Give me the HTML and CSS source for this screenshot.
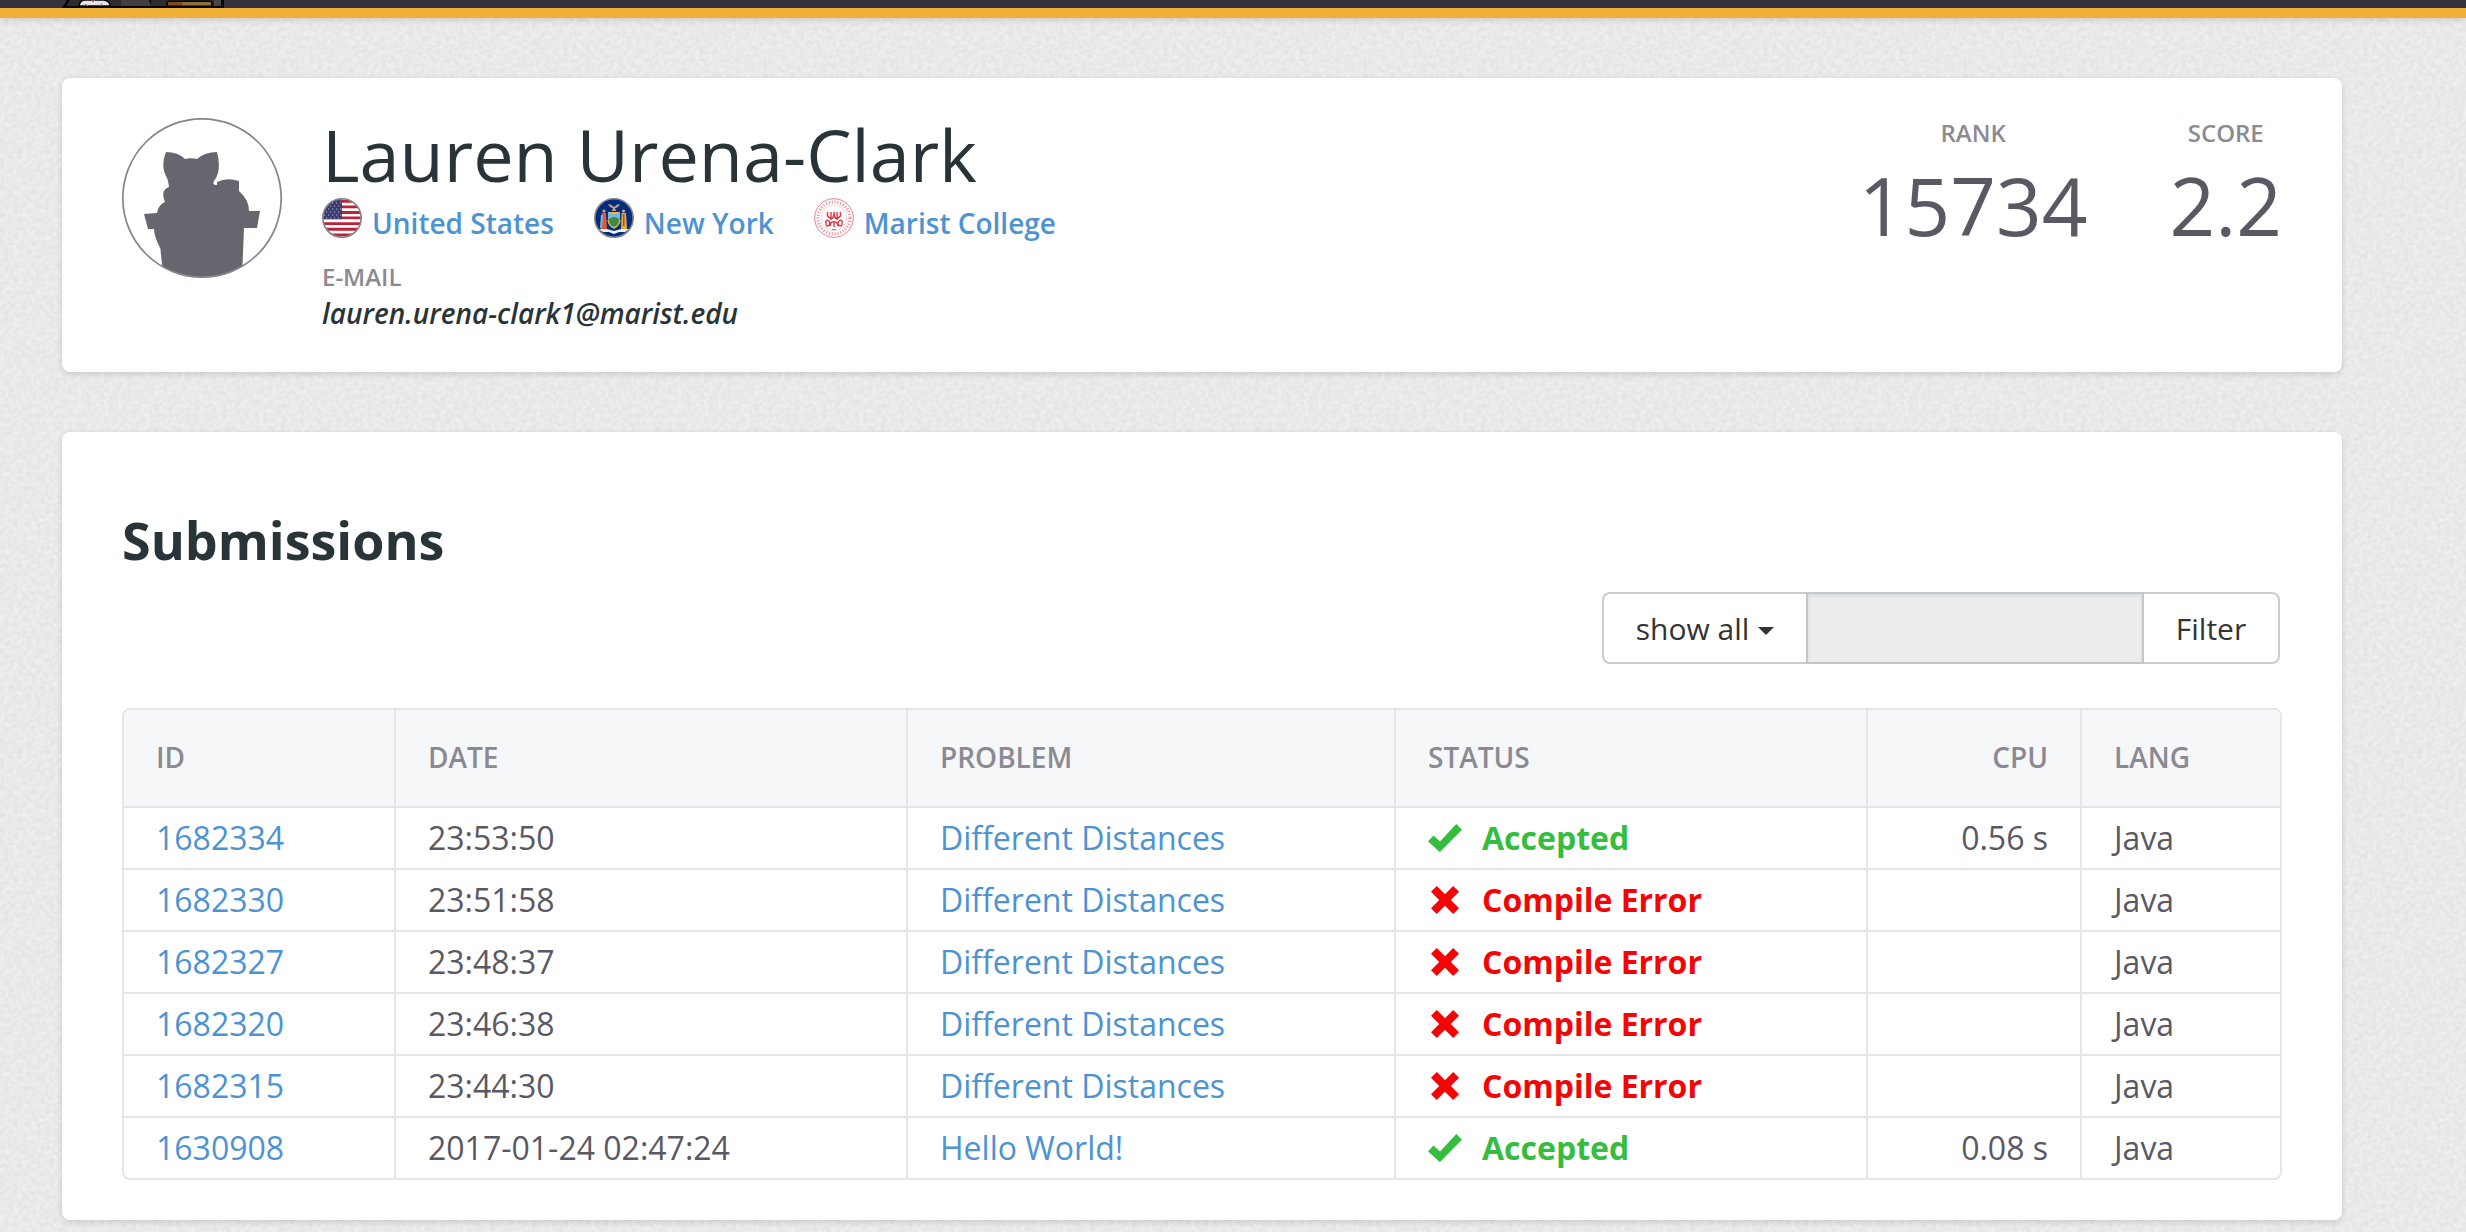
FILE: index.html
```html
<!DOCTYPE html>
<html lang="en">
<head>
<meta charset="utf-8">
<title>Lauren Urena-Clark</title>
<link rel="stylesheet" href="styles.css">
</head>
<body>
<svg class="defs" width="0" height="0" aria-hidden="true">
  <symbol id="check" viewBox="0 0 34 28"><path d="M0 17.3 5.5 11.5 12 17.5 28.3 0 34 5.8 11.8 28.2Z" fill="#35bd3f"/></symbol>
  <symbol id="cross" viewBox="0 0 28 28"><path d="M5.8 0 14 8.2 22.2 0 28 5.8 19.8 14 28 22.2 22.2 28 14 19.8 5.8 28 0 22.2 8.2 14 0 5.8Z" fill="#f40505"/></symbol>
</svg>
<header class="topbar">
  <svg class="logo" width="162" height="8" viewBox="0 0 162 8">
    <path d="M0 8 5 0H162V8Z" fill="#060606"/>
    <path d="M4 6 8 0H59V6Z" fill="#2c2c2c"/>
    <path d="M59 0H87L89 6H59Z" fill="#404040"/>
    <path d="M89 0H154V6H89Z" fill="#2c2c2c"/>
    <path d="M152 0H159V6H152Z" fill="#454545"/>
    <path d="M17 6Q18 0 23 0H42Q48 1 48 6Z" fill="#e8e0e4" stroke="#060606" stroke-width="1.5"/>
    <path d="M23 4 26 6M30 0 31 2 33 0M40 3 38 6" stroke="#8d7b81" stroke-width="1" fill="none"/>
    <path d="M104 6V2Q105 .4 108 .4H147Q151 .4 151 3V6Z" fill="#060606"/>
    <path d="M106 2H120V5.500H106Z" fill="#7f4724"/><path d="M120 2H149V5.500H120Z" fill="#8f6e38"/>
  </svg>
</header>
<main class="page">
  <section class="card profile">
    <svg class="avatar" width="160" height="160" viewBox="0 0 160 160">
      <clipPath id="round"><circle cx="80" cy="80" r="79"/></clipPath>
      <path clip-path="url(#round)" fill="#66666e" d="M44 34Q56 34 63 41Q69 39.500 75 41Q83 34 95 34Q100 53 92 63Q90 67 95 67V64Q105 59 117 63V73Q127 82 127 93H138L135 110H122L120 160H42Q40 149 38.500 131Q32 118 32 111H26L22 96L35 95Q36 87 43 84Q38 72 47 69Q46 62 45 60Q38 48 44 34Z"/>
      <circle cx="80" cy="80" r="79.200" fill="none" stroke="#85858d" stroke-width="1.700"/>
    </svg>
    <div class="info">
      <h1 class="name">Lauren Urena-Clark</h1>
      <div class="places">
        <a class="place">
          <svg width="40" height="40" viewBox="0 0 40 40">
            <clipPath id="disc"><circle cx="20" cy="20" r="19"/></clipPath>
            <g clip-path="url(#disc)">
              <path fill="#fff" d="M0 0H40V40H0Z"/>
              <path stroke="#bd2238" stroke-width="2.850" d="M0 3.200H40M0 8.900H40M0 14.500H40M0 20H40M0 25.600H40M0 31.200H40M0 37H40"/>
              <path fill="#fff" d="M0 21.300H40V24H0Z"/>
              <path fill="#3c3b6e" d="M0 0H20V21.300H0Z"/>
              <path stroke="#b9b9cf" stroke-width="1.200" stroke-dasharray="1.200 2.800" d="M6 5H20M4 8H20M2 11H20M4 14H20M2 17H20M10 2H20M4 20H20"/>
            </g>
            <circle cx="20" cy="20" r="19.200" fill="none" stroke="#85858d" stroke-width="1.600"/>
          </svg>
          <span>United States</span>
        </a>
        <a class="place">
          <svg width="40" height="40" viewBox="0 0 40 40">
            <circle cx="20" cy="20" r="19.200" fill="#002d7d" stroke="#85858d" stroke-width="1.600"/>
            <path d="M14 6Q17 6 20 9Q23 6 26 6Q24 10 21 10L22 13H18L19 10Q16 10 14 6Z" fill="#cfa27a"/>
            <path d="M14 14H26V24Q24 29 20 30Q16 29 14 24Z" fill="#78b8dc"/>
            <path d="M14 22Q20 16 26 22V24Q24 28 20 29Q16 28 14 24Z" fill="#3c8a45"/>
            <path d="M15 14H25V16H15Z" fill="#e8b64a"/>
            <path d="M14 22Q15 28 20 30Q25 28 26 22" fill="none" stroke="#e5b341" stroke-width="1.500"/>
            <circle cx="10" cy="13" r="1.600" fill="#dca37c"/><path d="M8 15H12L13 31H7Z" fill="#d95b3b"/><path d="M7 17H9L8 30H6Z" fill="#81b6dc"/>
            <circle cx="29.500" cy="13" r="1.600" fill="#dca37c"/><path d="M27.500 15H32L33 31H27Z" fill="#e3a93c"/><path d="M29 16H30.500V28H29Z" fill="#c2442c"/>
            <path d="M5 31H13L20 33 27 31H35L31 34H25L20 36 15 34H9Z" fill="#f1f1f5"/>
          </svg>
          <span>New York</span>
        </a>
        <a class="place">
          <svg width="40" height="40" viewBox="0 0 40 40" fill="none" stroke="#e8828b">
            <circle cx="20" cy="20" r="19.300" fill="#fff" stroke-width="1"/>
            <circle cx="20" cy="20" r="12.800" stroke-width=".5" stroke="#f0a9af"/>
            <circle cx="20" cy="20" r="16" stroke="#e2606c" stroke-width="3.200" stroke-dasharray="1.300 1.600" pathLength="100" opacity=".6"/>
            <path stroke="#d93646" stroke-width="1.400" d="M14 14Q12 18 16 20Q20 22 20 14Q20 22 24 20Q28 18 26 14M17 14V22M23 14V22M12 27Q11 20 15 23Q17 25 15 28M16 28Q17 23 20 24Q23 23 24 28M28 27Q29 20 25 23Q23 25 25 28M20 23V29M12 28 16 27M28 28 24 27"/>
            <path d="M18 31.500H22" stroke="#d93646" stroke-width=".8"/>
          </svg>
          <span>Marist College</span>
        </a>
      </div>
      <div class="label email-label">E-MAIL</div>
      <div class="email">lauren.urena-clark1@marist.edu</div>
    </div>
    <div class="stats">
      <div class="stat"><div class="label">RANK</div><div class="value">15734</div></div>
      <div class="stat"><div class="label">SCORE</div><div class="value">2.2</div></div>
    </div>
  </section>

  <section class="card submissions">
    <h2 class="title">Submissions</h2>
    <div class="filter">
      <button class="btn btn-first">show all<span class="caret"></span></button>
      <input class="field" type="text" disabled>
      <button class="btn btn-last">Filter</button>
    </div>
    <table class="table">
      <colgroup><col class="c-id"><col class="c-date"><col class="c-problem"><col class="c-status"><col class="c-cpu"><col></colgroup>
      <thead><tr><th>ID</th><th>DATE</th><th>PROBLEM</th><th>STATUS</th><th class="num">CPU</th><th>LANG</th></tr></thead>
      <tbody>
        <tr><td><a>1682334</a></td><td>23:53:50</td><td><a>Different Distances</a></td><td class="ok"><svg class="mark" width="34" height="28"><use href="#check"/></svg>Accepted</td><td class="num">0.56 s</td><td>Java</td></tr>
        <tr><td><a>1682330</a></td><td>23:51:58</td><td><a>Different Distances</a></td><td class="bad"><svg class="mark" width="34" height="28"><use href="#cross"/></svg>Compile Error</td><td class="num"></td><td>Java</td></tr>
        <tr><td><a>1682327</a></td><td>23:48:37</td><td><a>Different Distances</a></td><td class="bad"><svg class="mark" width="34" height="28"><use href="#cross"/></svg>Compile Error</td><td class="num"></td><td>Java</td></tr>
        <tr><td><a>1682320</a></td><td>23:46:38</td><td><a>Different Distances</a></td><td class="bad"><svg class="mark" width="34" height="28"><use href="#cross"/></svg>Compile Error</td><td class="num"></td><td>Java</td></tr>
        <tr><td><a>1682315</a></td><td>23:44:30</td><td><a>Different Distances</a></td><td class="bad"><svg class="mark" width="34" height="28"><use href="#cross"/></svg>Compile Error</td><td class="num"></td><td>Java</td></tr>
        <tr><td><a>1630908</a></td><td>2017-01-24 02:47:24</td><td><a>Hello World!</a></td><td class="ok"><svg class="mark" width="34" height="28"><use href="#check"/></svg>Accepted</td><td class="num">0.08 s</td><td>Java</td></tr>
      </tbody>
    </table>
  </section>
</main>
</body>
</html>
```
FILE: styles.css
```css
* { box-sizing: border-box; }
body {
  margin: 0;
  height: 1232px;
  overflow: hidden;
  color: #5a5963;
  font-family: "Open Sans", "Noto Sans", sans-serif;
  background: #e9e9e9 url("data:image/svg+xml,%3Csvg xmlns='http://www.w3.org/2000/svg' width='600' height='600'%3E%3Cfilter id='n' x='0' y='0' width='100%25' height='100%25' color-interpolation-filters='sRGB'%3E%3CfeTurbulence type='fractalNoise' baseFrequency='.22' numOctaves='3' stitchTiles='stitch'/%3E%3CfeColorMatrix values='.08 0 0 0 .875 .08 0 0 0 .875 .08 0 0 0 .875 0 0 0 0 1'/%3E%3C/filter%3E%3Crect width='600' height='600' filter='url(%23n)'/%3E%3C/svg%3E");
}
.defs { position: absolute; }
.topbar {
  height: 18px;
  padding-left: 62px;
  background: #32313c;
  border-bottom: 10px solid #efb035;
  box-shadow: 0 2px 6px rgba(0, 0, 0, .14);
}
.logo { display: block; }
.page {
  display: flex;
  flex-direction: column;
  gap: 60px;
  width: 2280px;
  margin: 60px 0 0 62px;
}
.card {
  background: #fff;
  border-radius: 8px;
  box-shadow: 0 2px 6px rgba(0, 0, 0, .14);
}
.profile {
  display: flex;
  align-items: flex-start;
  height: 294px;
  padding: 40px 60px;
}
.avatar { flex: none; margin-right: 40px; }
.info { flex: 1; }
.name {
  margin: 0;
  font-size: 72px;
  font-weight: 400;
  line-height: 72px;
  color: #293438;
}
.places { display: flex; gap: 40px; margin-top: 8px; }
.place {
  display: flex;
  gap: 10px;
  font-size: 28px;
  font-weight: 600;
  line-height: 50px;
  color: #4d93d2;
}
.label { font-size: 24px; font-weight: 600; line-height: 30px; color: #8b8a92; }
.email-label { margin-top: 11px; line-height: 36px; }
.email { font-size: 28px; font-weight: 600; font-style: italic; line-height: 36px; color: #293438; }
.stats { display: flex; gap: 82px; text-align: center; }
.value { margin-top: 17px; font-size: 80px; line-height: 80px; }
.submissions { height: 788px; padding: 73px 60px 40px; }
.title {
  margin: 0;
  font-size: 52px;
  font-weight: 700;
  line-height: 70px;
  color: #293438;
}
.filter { display: flex; justify-content: flex-end; height: 72px; margin: 17px 2px 44px 0; }
.btn {
  display: flex;
  align-items: center;
  justify-content: center;
  padding: 1px 0 0;
  border: 2px solid #ccc;
  background: #fff;
  color: #333;
  font: 30px/40px "Open Sans", sans-serif;
}
.btn-first { width: 204px; border-right: 0; border-radius: 8px 0 0 8px; }
.btn-last { width: 136px; border-left: 0; border-radius: 0 8px 8px 0; }
.caret {
  margin: 4px 0 0 9px;
  border: 8px solid transparent;
  border-top-color: #333;
  border-bottom: 0;
}
.field {
  width: 338px;
  border: 2px solid #c1c6cb;
  background: #ededed;
  box-shadow: inset 0 2px 4px rgba(0, 0, 0, .09);
}
.table {
  width: 2160px;
  table-layout: fixed;
  border: 2px solid #e6e6e6;
  border-radius: 8px;
  border-spacing: 0;
  overflow: hidden;
}
.c-id { width: 272px; }
.c-date { width: 512px; }
.c-problem { width: 488px; }
.c-status { width: 472px; }
.c-cpu { width: 214px; }
th, td {
  padding: 0 32px;
  border-right: 2px solid #e6e6e6;
  text-align: left;
  white-space: nowrap;
}
th {
  height: 98px;
  padding-bottom: 2px;
  border-bottom: 2px solid #e6e6e6;
  background: #f6f7f9;
  color: #8b8a92;
  font-size: 28px;
  font-weight: 600;
}
td { height: 62px; border-bottom: 2px solid #e6e6e6; font-size: 32px; line-height: 60px; }
th:last-child, td:last-child { border-right: 0; }
tbody tr:last-child td { height: 60px; border-bottom: 0; }
.table a { color: #4d93d2; }
.table .num { text-align: right; }
.ok, .bad { font-weight: 700; }
.ok { color: #35bd3f; }
.bad { color: #f40505; }
.mark { margin-right: 20px; vertical-align: -2px; }
```
